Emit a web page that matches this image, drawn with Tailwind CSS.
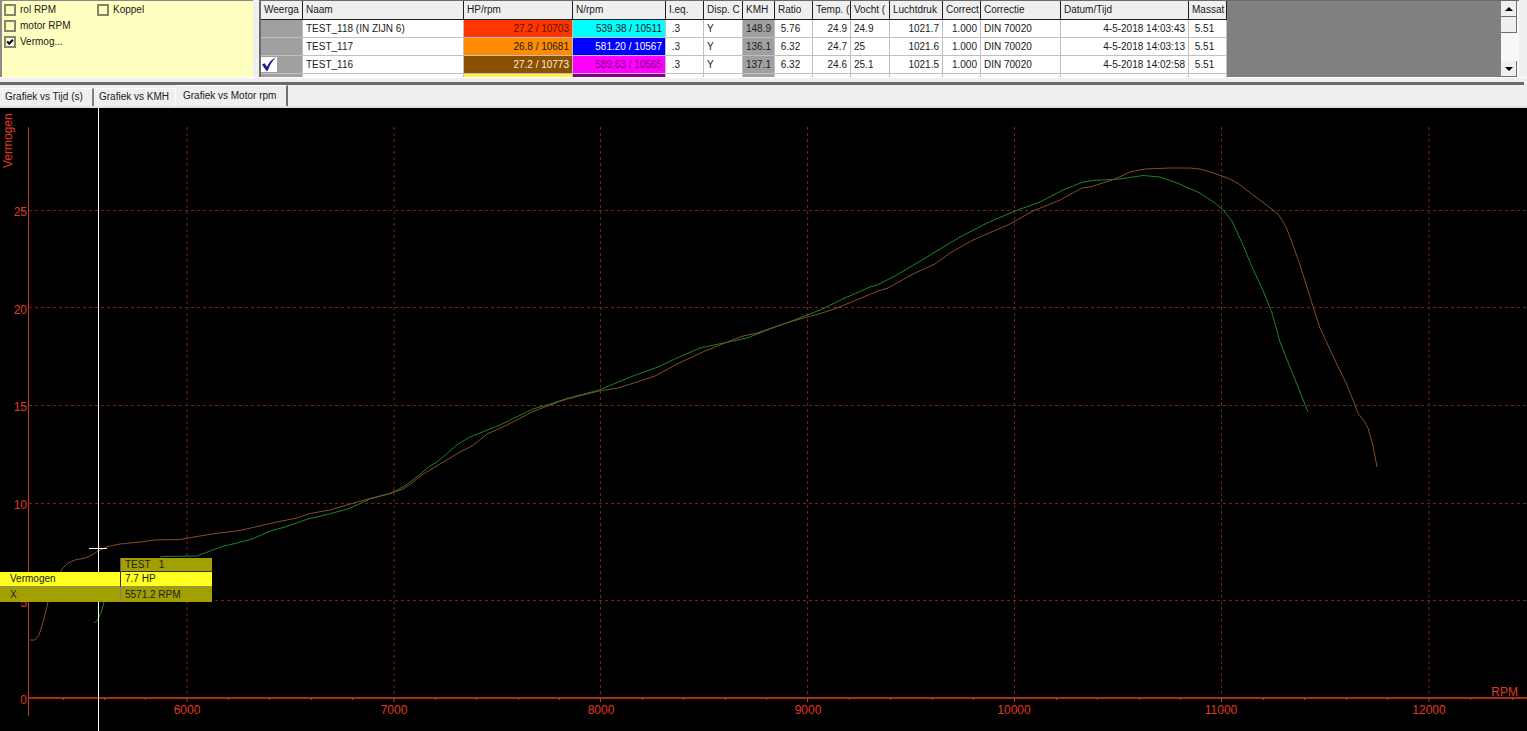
<!DOCTYPE html>
<html lang="nl">
<head>
<meta charset="utf-8">
<title>Testbank - Grafiek vs Motor rpm</title>
<script src="https://cdn.jsdelivr.net/npm/@tailwindcss/browser@4"></script>
</head>
<body class="flex min-h-screen flex-col overflow-hidden bg-[#efefef] font-['Liberation_Sans',Arial,sans-serif] text-[10px] leading-3 text-[#202020]">

<header class="flex h-[78px] shrink-0 border-b border-white pr-2">
  <!-- Channel selection -->
  <fieldset class="grid w-[253px] shrink-0 grid-cols-[93px_auto] content-start gap-y-1 border-t border-l-2 border-[#8a8a8a] bg-[#ffffbf] pt-[3px] pl-[2px]">
    <label class="flex h-3 items-center gap-1"><input type="checkbox" class="size-3 appearance-none border-2 border-[#85856c]">rol RPM</label>
    <label class="flex h-3 items-center gap-1"><input type="checkbox" class="size-3 appearance-none border-2 border-[#85856c]">Koppel</label>
    <label class="col-span-2 flex h-3 items-center gap-1"><input type="checkbox" class="size-3 appearance-none border-2 border-[#85856c]">motor RPM</label>
    <label class="col-span-2 flex h-3 items-center gap-1">
      <span class="relative flex"><input type="checkbox" checked class="size-3 appearance-none border-2 border-[#85856c] bg-[#fffff0]">
        <svg class="pointer-events-none absolute inset-0 size-3" viewBox="0 0 12 12"><path d="M3.2 5.4 5.2 7.8 8.9 3.8" fill="none" stroke="#000" stroke-width="2"/></svg></span>Vermog...</label>
  </fieldset>

  <!-- Test list -->
  <div class="ml-[6px] flex min-w-0 flex-1 overflow-hidden border-t border-l-2 border-[#6a6a6a] bg-[#808080]">
    <div class="min-w-0 flex-1 overflow-hidden">
      <table class="w-[966px] table-fixed border-separate border-spacing-0 bg-white whitespace-nowrap [&_td]:overflow-hidden [&_td]:border-r [&_td]:border-b [&_td]:border-[#c0c0c0] [&_td]:px-[3px] [&_td]:py-0 [&_th]:overflow-hidden [&_th]:border-r [&_th]:border-b [&_th]:border-[#202020] [&_th]:bg-[#efefef] [&_th]:py-0 [&_th]:pl-[3px] [&_th]:text-left [&_th]:font-normal">
        <colgroup>
          <col class="w-[42px]"><col class="w-[161px]"><col class="w-[109px]"><col class="w-[93px]"><col class="w-[38px]"><col class="w-[39px]"><col class="w-[32px]"><col class="w-[38px]"><col class="w-[38px]"><col class="w-[39px]"><col class="w-[53px]"><col class="w-[38px]"><col class="w-[80px]"><col class="w-[128px]"><col class="w-[38px]">
        </colgroup>
        <thead>
          <tr class="h-[19px]"><th>Weerga</th><th>Naam</th><th>HP/rpm</th><th>N/rpm</th><th>I.eq.</th><th>Disp. C</th><th>KMH</th><th>Ratio</th><th>Temp. (</th><th>Vocht (</th><th>Luchtdruk</th><th>Correct</th><th>Correctie</th><th>Datum/Tijd</th><th>Massat</th></tr>
        </thead>
        <tbody>
          <tr class="h-[18px]"><td class="bg-[#a0a0a0]"></td><td>TEST_118 (IN ZIJN 6)</td><td class="bg-[#ff3600] text-right text-[#5c1400]">27.2 / 10703</td><td class="bg-[#00ffff] text-right">539.38 / 10511</td><td>&nbsp;.3</td><td>Y</td><td class="bg-[#a0a0a0]">148.9</td><td>&nbsp;5.76</td><td class="text-right">24.9</td><td>24.9</td><td class="text-right">1021.7</td><td class="text-right">1.000</td><td>DIN 70020</td><td class="text-right">4-5-2018 14:03:43</td><td>&nbsp;5.51</td></tr>
          <tr class="h-[18px]"><td class="bg-[#a0a0a0]"></td><td>TEST_117</td><td class="bg-[#ff8c00] text-right">26.8 / 10681</td><td class="bg-[#0000ff] text-right text-white">581.20 / 10567</td><td>&nbsp;.3</td><td>Y</td><td class="bg-[#a0a0a0]">136.1</td><td>&nbsp;6.32</td><td class="text-right">24.7</td><td>25</td><td class="text-right">1021.6</td><td class="text-right">1.000</td><td>DIN 70020</td><td class="text-right">4-5-2018 14:03:13</td><td>&nbsp;5.51</td></tr>
          <tr class="h-[18px]"><td class="bg-[#a0a0a0] px-0!"><svg class="block h-[15px] w-4 bg-white" viewBox="0 0 16 15" role="img" aria-label="Weergegeven"><path d="M1 7.5 3.6 6.2 6 9.8C8 5.500 10.800 2.200 15 .3 11 4 8.600 8.500 6.800 13.700H5.200Z" fill="#1c1c8c"/></svg></td><td>TEST_116</td><td class="bg-[#8b4f00] text-right text-[#ffeedd]">27.2 / 10773</td><td class="bg-[#ff00ff] text-right text-[#800080]">589.63 / 10565</td><td>&nbsp;.3</td><td>Y</td><td class="bg-[#a0a0a0]">137.1</td><td>&nbsp;6.32</td><td class="text-right">24.6</td><td>25.1</td><td class="text-right">1021.5</td><td class="text-right">1.000</td><td>DIN 70020</td><td class="text-right">4-5-2018 14:02:58</td><td>&nbsp;5.51</td></tr>
          <tr class="h-[18px]"><td class="bg-[#a0a0a0]"></td><td></td><td class="bg-[#fff24a]"></td><td class="bg-[#800080]"></td><td></td><td></td><td class="bg-[#a0a0a0]"></td><td></td><td></td><td></td><td></td><td></td><td></td><td></td><td></td></tr>
        </tbody>
      </table>
    </div>
    <div class="flex w-[18px] shrink-0 flex-col bg-[#f8f8f8] pr-[2px]">
      <button type="button" aria-label="Omhoog" class="flex h-4 items-center justify-center border-r border-b border-[#707070] bg-[#efefef]"><svg class="h-1 w-2" viewBox="0 0 8 4"><path d="M4 0 8 4H0Z"/></svg></button>
      <button type="button" aria-label="Schuifblok" class="h-4 border-r border-b border-[#707070] bg-[#efefef]"></button>
      <button type="button" aria-label="Omlaag" class="mt-auto flex h-4 items-center justify-center border-r border-b border-[#707070] bg-[#efefef]"><svg class="h-1 w-2" viewBox="0 0 8 4"><path d="M4 4 8 0H0Z"/></svg></button>
    </div>
  </div>
</header>

<div class="mt-1 mr-[3px] h-[3px] shrink-0 bg-[#6a6a6a]"></div>

<!-- Chart tabs -->
<nav role="tablist" class="flex h-[23px] shrink-0 items-end border-b-2 border-[#e2e2e2]">
  <button type="button" role="tab" aria-selected="false" class="h-[18px] w-[94px] border-t border-r-2 border-t-white border-r-[#808080] pb-px pl-[5px] text-left whitespace-nowrap">Grafiek vs Tijd (s)</button>
  <button type="button" role="tab" aria-selected="false" class="h-[18px] w-[82px] border-t border-r border-white pb-px pl-[5px] text-left whitespace-nowrap">Grafiek vs KMH</button>
  <button type="button" role="tab" aria-selected="true" class="h-[21px] w-[112px] border-t border-r-2 border-t-white border-r-[#707070] pb-px pl-[7px] text-left whitespace-nowrap">Grafiek vs Motor rpm</button>
</nav>

<main class="relative flex-1 bg-black">
  <svg class="block h-auto w-full" viewBox="0 108 1527 623" fill="none" role="img" aria-label="Vermogen tegen motortoerental">
    <g stroke="#7a2018" stroke-dasharray="3 3">
      <path d="M29 210.500H1527M29 307.500H1527M29 405.500H1527M29 503.500H1527M29 600.500H1527"/>
      <path d="M187 127V697M394 127V697M600.500 127V697M807.500 127V697M1014.500 127V697M1221.500 127V697M1429 127V697"/>
    </g>
    <g stroke="#1a8426" stroke-linejoin="round">
      <path d="M94 623 97 621 101 613 104 602"/>
      <path d="M160 557 163 556.500 197 556 210 551 222 546.500 235 543.500 252 539 272 530.500 285 527 308 519 325 515 348 509 370 499 390 493.500 403 487 413 480 421 473.500 430 466 437 462 458 444 470 437 500 425 533 409 550 404 567 398.500 599 390 633 376 658 367 677 358 700 348 733 341 747 338 770 329 797 319 820 310 845 298 870 287 877 285 895 276 922 260 960 237 987 223 1015 211 1040 202 1063 190 1083 182 1093 180.500 1120 179 1143 175.500 1160 177 1177 183 1200 193 1215 203 1223 210 1232 221 1243 245 1252 267 1262 288 1272 313 1280 342 1292 372 1308 412"/>
    </g>
    <path stroke="#854c2a" stroke-linejoin="round" d="M30 640H35L39 635 44 619 48 602 56 583 62 569 68 563 75 560 85 558 92 555 98 551 108 546.500 120 544 140 542 155 540 180 539.500 200 536 215 533.500 240 530.500 257 526.500 272 523 297 518 310 513.500 330 510 350 504 370 498.500 390 493.500 403 489 412 483 421 475.500 430 470 440 464 460 452 472 446 487 434 507 425 533 411.500 550 405 567 399 599 391 618 388 637 382 655 376 677 364 705 351 730 341 743 336 757 333 770 328.500 793 321 822 313 837 308 878 291 888 288 913 274 935 264 950 253 973 240 1010 224 1033 211 1060 200 1082 188 1092 186.500 1115 179 1130 172 1145 169 1170 168 1190 168 1200 169 1207 171 1222 176 1230 179 1239 184 1253 195 1273 210 1278 214 1282 220 1286 227 1290 237 1300 265 1310 297 1320 328 1333 356 1347 385 1358 413 1364 421 1368 428 1373 446 1377 467"/>
    <g stroke="#c23a22">
      <path d="M28.500 127V716"/>
      <path stroke="#a82c1a" stroke-width="2" d="M28 698H1527"/>
      <path d="M187 698V702M394 698V702M600.500 698V702M807.500 698V702M1014.500 698V702M1221.500 698V702M1429 698V702"/>
      <path d="M63.500 698V700M104.500 698V700M145.500 698V700M228.500 698V700M269.500 698V700M311.500 698V700M352.500 698V700M435.500 698V700M476.500 698V700M518.500 698V700M559.500 698V700M642.500 698V700M683.500 698V700M725.500 698V700M766.500 698V700M849.500 698V700M890.500 698V700M932.500 698V700M973.500 698V700M1056.500 698V700M1097.500 698V700M1139.500 698V700M1180.500 698V700M1263.500 698V700M1304.500 698V700M1346.500 698V700M1387.500 698V700M1470.500 698V700M1512.500 698V700"/>
    </g>
    <path stroke="#fff" d="M98.500 108V731M89 548.500H107"/>
    <g fill="#e03a20" font-size="12">
      <g text-anchor="end">
        <text x="27" y="216">25</text><text x="27" y="314">20</text><text x="27" y="411">15</text><text x="27" y="509">10</text><text x="27" y="607">5</text><text x="27" y="704">0</text>
      </g>
      <g text-anchor="middle">
        <text x="187" y="714">6000</text><text x="394" y="714">7000</text><text x="601" y="714">8000</text><text x="808" y="714">9000</text><text x="1014" y="714">10000</text><text x="1221" y="714">11000</text><text x="1429" y="714">12000</text>
      </g>
      <text x="1518" y="696" text-anchor="end">RPM</text>
      <text transform="translate(12 168) rotate(-90)">Vermogen</text>
    </g>
  </svg>

  <!-- Cursor readout, lies over the plot -->
  <table class="absolute top-[450px] left-0 w-[212px] table-fixed border-separate border-spacing-0 text-left [&_td]:p-0 [&_th]:p-0 [&_th]:font-normal">
    <colgroup><col class="w-[120px]"><col class="w-[92px]"></colgroup>
    <tr class="h-[14px]"><td></td><th class="border-b border-l border-b-[#303050] border-l-[#606060] bg-[#a2a000] pl-1! whitespace-pre">TEST   1</th></tr>
    <tr class="h-[15px] bg-[#ffff20]"><th class="border-b border-[#909060] pl-[10px]!">Vermogen</th><td class="border-b border-l border-b-[#909060] border-l-[#303050] pl-1!">7.7 HP</td></tr>
    <tr class="h-[15px] bg-[#a2a000]"><th class="pl-[10px]!">X</th><td class="border-l border-[#808080] pl-1!">5571.2 RPM</td></tr>
  </table>
</main>
</body>
</html>
